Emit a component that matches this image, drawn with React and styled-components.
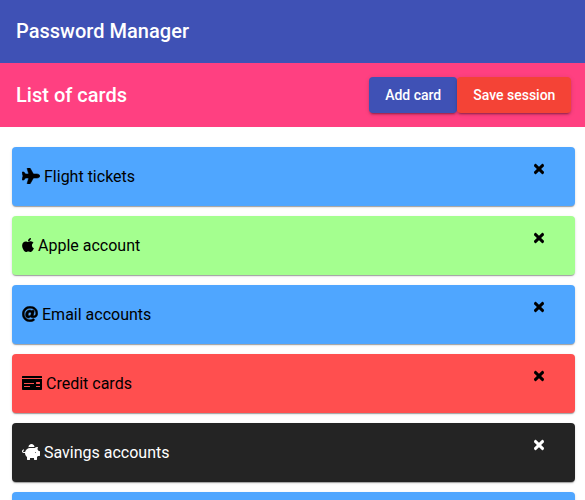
import React from "react";
import styled, { createGlobalStyle } from "styled-components";
import { FaPlane, FaApple, FaAt, FaTimes, FaPiggyBank, FaMoneyCheck } from "react-icons/fa";

const GlobalStyle = createGlobalStyle`
  * { box-sizing: border-box; }
  body { margin: 0; background: #fff; font-family: Roboto, sans-serif; }
`;

const Page = styled.div`
  display: flex;
  flex-direction: column;
  height: 100vh;
  overflow: hidden;
`;

const Toolbar = styled.header`
  display: flex;
  flex-shrink: 0;
  align-items: center;
  height: ${(p) => p.$height}px;
  padding: 0 14px 0 16px;
  background: ${(p) => p.$color};
  color: #fff;
`;

const Title = styled.h1`
  flex: 1;
  margin: 0;
  font-size: 20px;
  line-height: 32px;
  font-weight: 500;
  letter-spacing: 0.02px;
`;

const AppTitle = styled(Title)`
  padding-bottom: 1px;
`;

const Button = styled.button`
  height: 36px;
  padding: 0 15.6px 0 16.4px;
  border: 0;
  border-radius: 4px;
  background: ${(p) => p.$color};
  color: #fff;
  font: 500 14px/36px Roboto, sans-serif;
  white-space: nowrap;
  box-shadow: 0 3px 1px -2px rgba(0, 0, 0, 0.2), 0 2px 2px 0 rgba(0, 0, 0, 0.14), 0 1px 5px 0 rgba(0, 0, 0, 0.12);
`;

const List = styled.main`
  display: flex;
  flex: 1;
  min-height: 0;
  flex-direction: column;
  gap: 10px;
  padding: 20px 10px 0 12px;
  overflow: hidden;
`;

const Card = styled.article`
  display: flex;
  flex-shrink: 0;
  justify-content: space-between;
  height: 59px;
  padding: 0 31px 0 10px;
  border-radius: 4px;
  background: ${(p) => p.$color};
  color: ${(p) => p.$ink || "#000"};
  box-shadow: 0 2px 1px -1px rgba(0, 0, 0, 0.2), 0 1px 1px 0 rgba(0, 0, 0, 0.14), 0 1px 3px 0 rgba(0, 0, 0, 0.12);
`;

const Label = styled.div`
  display: flex;
  align-items: center;
  gap: 4px;
  font-size: 16px;
  line-height: 24px;
  svg {
    height: 16px;
    width: ${(p) => p.$icon}px;
    margin-bottom: 1px;
    stroke-width: ${(p) => p.$weight || 0}px;
  }
`;

const Close = styled.button`
  display: flex;
  align-self: flex-start;
  margin-top: 14px;
  padding: 0;
  border: 0;
  background: none;
  color: inherit;
  svg { width: 10px; height: 16px; stroke-width: 16px; }
`;

const cards = [
  { name: "Flight tickets", Icon: FaPlane, size: 18, weight: 18, color: "#4fa6ff" },
  { name: "Apple account", Icon: FaApple, size: 12, color: "#a4ff8f" },
  { name: "Email accounts", Icon: FaAt, size: 16, weight: 14, color: "#4fa6ff" },
  { name: "Credit cards", Icon: FaMoneyCheck, size: 20, color: "#ff4f4f" },
  { name: "Savings accounts", Icon: FaPiggyBank, size: 18, color: "#242424", ink: "#fff" },
];

export default function App() {
  return (
    <Page>
      <GlobalStyle />
      <Toolbar $height={63} $color="#3f51b5"><AppTitle>Password Manager</AppTitle></Toolbar>
      <Toolbar $height={64} $color="#ff4081">
        <Title as="h2">List of cards</Title>
        <Button $color="#3f51b5">Add card</Button>
        <Button $color="#f44336">Save session</Button>
      </Toolbar>
      <List>
        {cards.map(({ name, Icon, size, weight, color, ink }) => (
          <Card key={name} $color={color} $ink={ink}>
            <Label $icon={size} $weight={weight}><Icon />{name}</Label>
            <Close aria-label="Remove card"><FaTimes /></Close>
          </Card>
        ))}
        <Card $color="#4fa6ff" />
      </List>
    </Page>
  );
}
